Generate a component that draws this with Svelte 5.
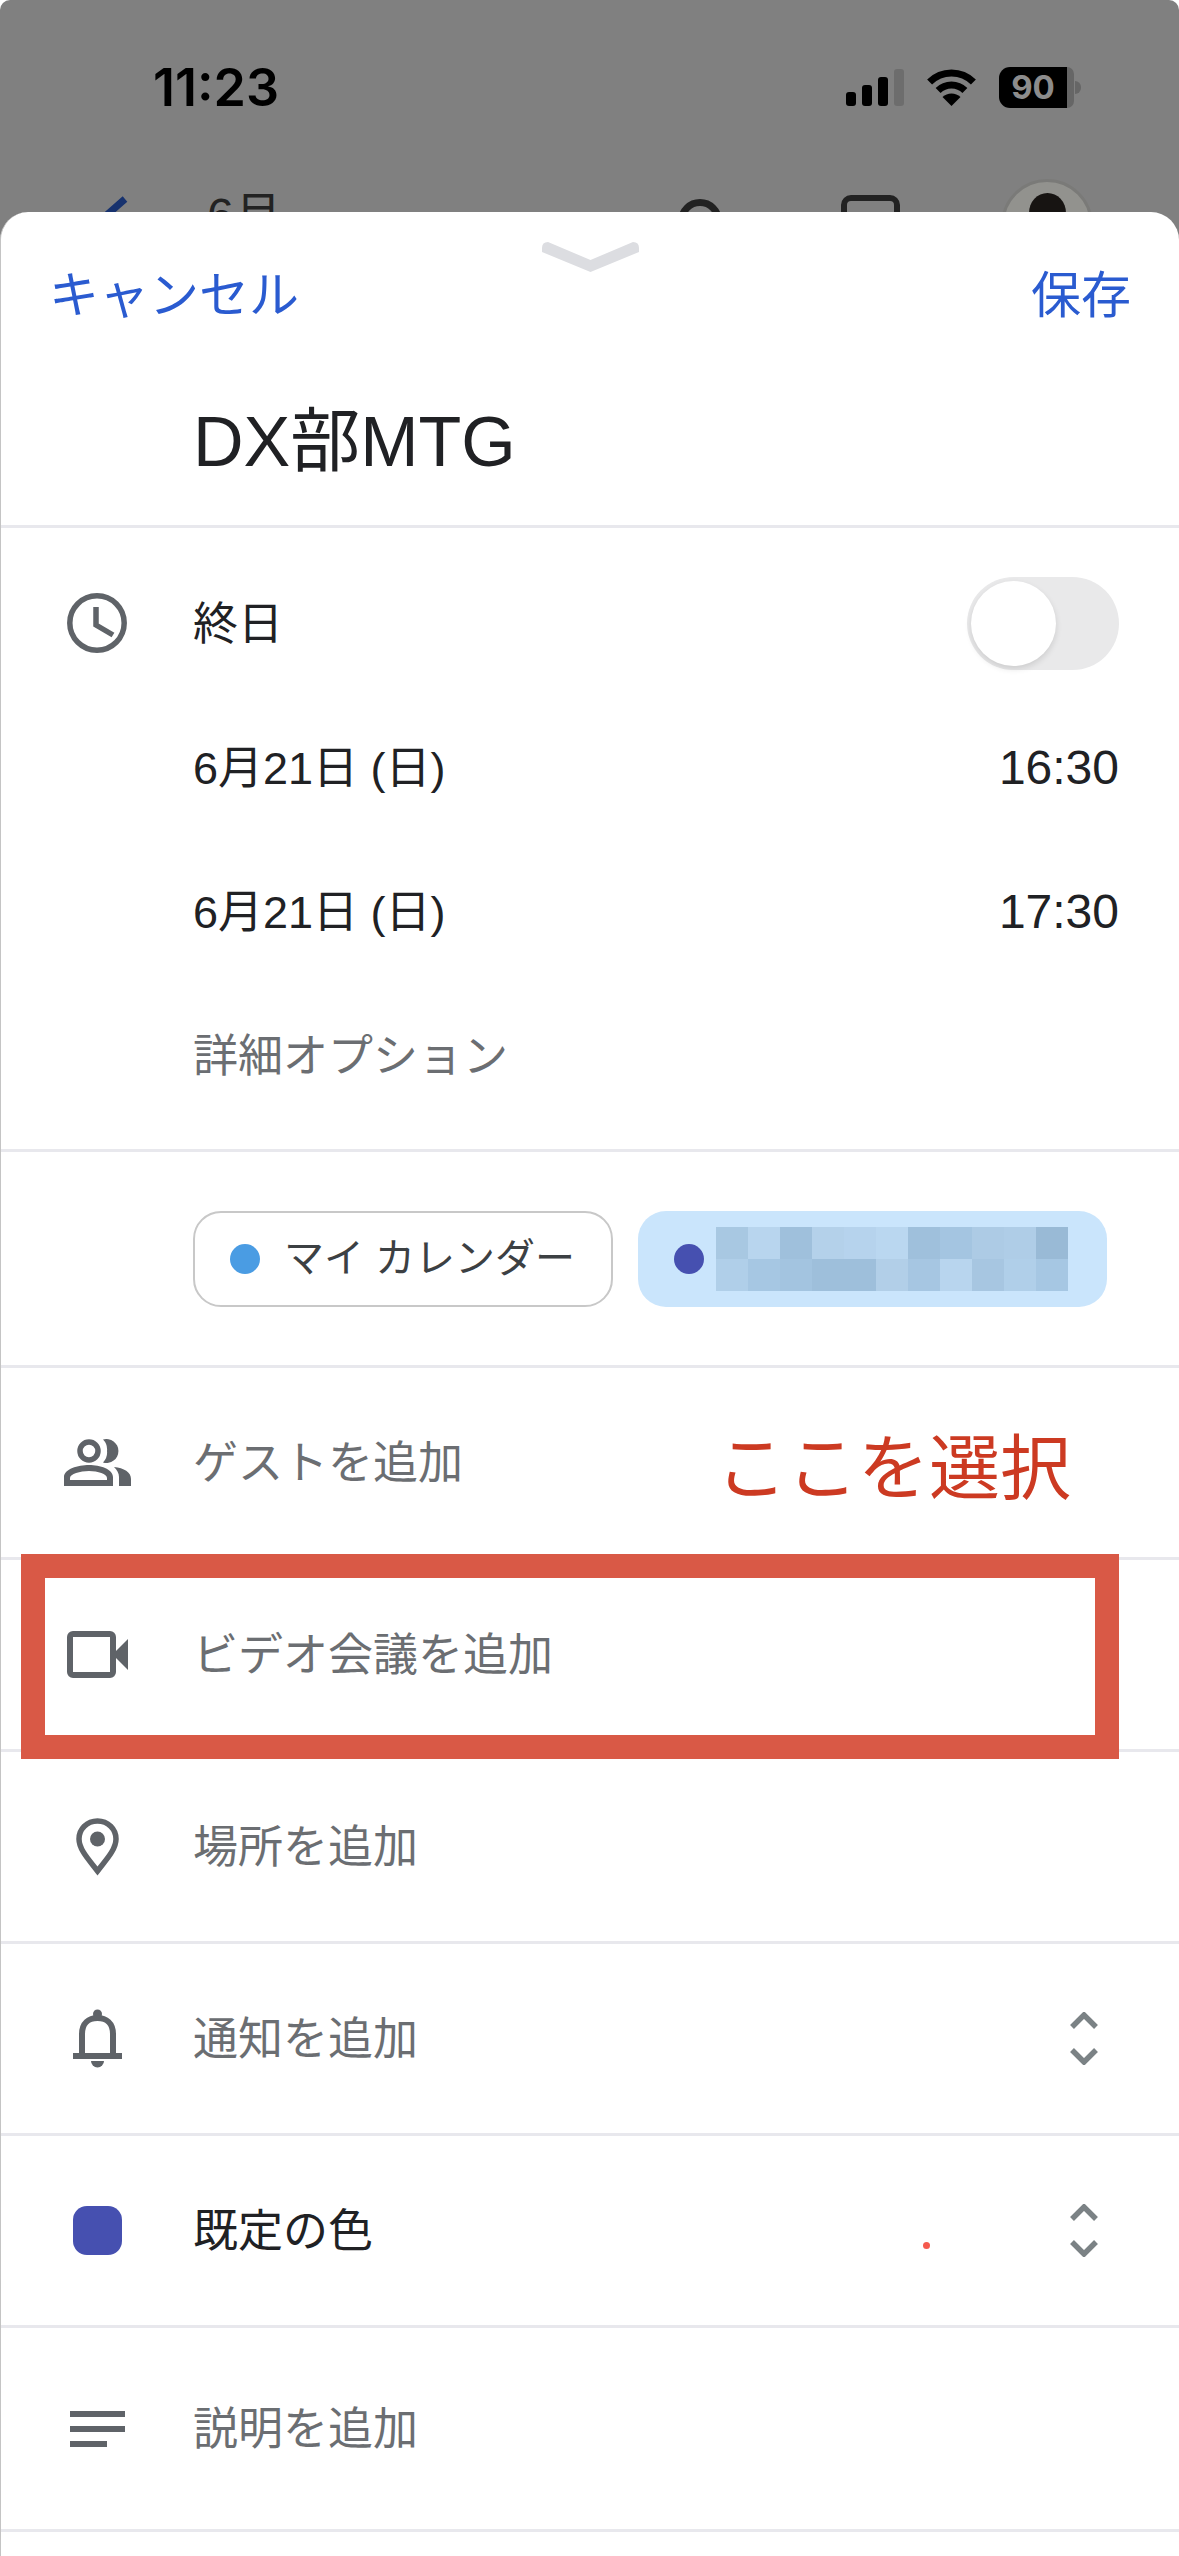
<script>
  const mosaicTop = ['#a8c8e2', '#b8d5ee', '#9fc0dc', '#b4d1ea', '#b6d3ed', '#bad7f0', '#9fc0dc', '#a4c5e1', '#adcbe5', '#afcde7', '#99bad6'];
  const mosaicBottom = ['#b0cfe9', '#a6c7e3', '#a3c4e0', '#9ebfdb', '#9ebfdb', '#b2cfe8', '#a6c6e2', '#b8d5ee', '#a7c6e1', '#b0cfe9', '#a6c7e3'];
  const mosaic = [...mosaicTop, ...mosaicBottom];
</script>

{#snippet updown()}
  <svg class="updown" width="28" height="53" viewBox="0 0 28 53" fill="none" stroke="#7b8285" stroke-width="5.5">
    <path d="M2 15 L14 3 L26 15" />
    <path d="M2 38 L14 50 L26 38" />
  </svg>
{/snippet}

<div class="page">
  <div class="backdrop">
    <div class="status">
      <span class="time">11:23</span>
      <div class="status-icons">
        <svg width="58" height="37" viewBox="0 0 58 37" fill="#000">
          <rect x="0" y="23" width="10" height="14" rx="3" />
          <rect x="16" y="16" width="10" height="21" rx="3" />
          <rect x="32" y="8" width="10" height="29" rx="3" />
          <rect x="48" y="0" width="10" height="37" rx="3" fill="#6d6d6d" />
        </svg>
        <svg class="wifi" width="51" height="37" viewBox="0 0 51 37" fill="none" stroke="#000" stroke-width="7">
          <path d="M3.6 13.1 A31 31 0 0 1 47.4 13.1" />
          <path d="M12.1 21.6 A19 19 0 0 1 38.9 21.6" />
          <path d="M25.5 37 L16.5 28 A13 13 0 0 1 34.5 28 Z" fill="#000" stroke="none" />
        </svg>
        <div class="battery">
          <div class="battery-body"><span>90</span></div>
          <div class="battery-rest"></div>
          <div class="battery-nub"></div>
        </div>
      </div>
    </div>
    <div class="appbar">
      <svg class="back" width="46" height="60" viewBox="0 0 46 60" fill="none" stroke="#17326e" stroke-width="7">
        <path d="M40 4 L8 32 L40 60" />
      </svg>
      <span class="month">6月</span>
      <div class="search"></div>
      <div class="cal"></div>
      <div class="avatar"><div class="hair"></div></div>
    </div>
  </div>

  <div class="sheet">
    <svg class="handle" width="97" height="30" viewBox="0 0 97 30" fill="#dcdde1">
      <path d="M6 0 L48.5 18 L91 0 Q97 0 97 6 V10 L48.5 30 L0 10 V6 Q0 0 6 0 Z" />
    </svg>

    <header class="head">
      <div class="actions">
        <span>キャンセル</span>
        <span>保存</span>
      </div>
      <div class="title">DX部MTG</div>
    </header>

    <section class="times">
      <div class="time-row">
        <div class="icon">
          <svg width="60" height="60" viewBox="0 0 60 60" fill="none" stroke="#5f6368" stroke-width="5.5">
            <circle cx="30" cy="30" r="27.2" />
            <path d="M29 14 V32 L46 42" />
          </svg>
        </div>
        <span class="label">終日</span>
        <div class="toggle"><div class="knob"></div></div>
      </div>
      <div class="time-row">
        <div class="icon"></div>
        <span class="label">6月21日 (日)</span>
        <span class="clock">16:30</span>
      </div>
      <div class="time-row">
        <div class="icon"></div>
        <span class="label">6月21日 (日)</span>
        <span class="clock">17:30</span>
      </div>
      <div class="time-row">
        <div class="icon"></div>
        <span class="label muted">詳細オプション</span>
      </div>
    </section>

    <section class="calendars">
      <div class="chip plain">
        <i class="dot light"></i>
        <span>マイ カレンダー</span>
      </div>
      <div class="chip picked">
        <i class="dot indigo"></i>
        <div class="mosaic">
          {#each mosaic as c}
            <b style="background:{c}"></b>
          {/each}
        </div>
      </div>
    </section>

    <div class="row">
      <div class="icon">
        <svg width="67" height="47" viewBox="0 0 67 47" fill="#5f6368">
          <circle cx="25" cy="12" r="9" fill="none" stroke="#5f6368" stroke-width="5.5" />
          <path d="M39 .5 A12 12 0 1 1 39 23.5 A14 14 0 0 0 43 12 A14 14 0 0 0 39 .5 Z" />
          <path fill-rule="evenodd" d="M0 47 V38 C0 30 14 26 25 26 C36 26 49 30 49 38 V47 Z M6 41 H43 V39 C43 35 34 32 25 32 C16 32 6 35 6 39 Z" />
          <path d="M50 28 C60 29 67 33 67 40 V47 H55 V38 C55 34 53 31 50 28 Z" />
        </svg>
      </div>
      <span class="label muted">ゲストを追加</span>
    </div>

    <div class="row">
      <div class="icon">
        <svg width="61" height="47" viewBox="0 0 61 47" fill="none" stroke="#5f6368" stroke-width="6">
          <rect x="3" y="3" width="43" height="41" rx="3" />
          <path d="M49 20 L61 8 V39 L49 27 Z" fill="#5f6368" stroke="none" />
        </svg>
      </div>
      <span class="label muted">ビデオ会議を追加</span>
    </div>

    <div class="row">
      <div class="icon">
        <svg width="43" height="58" viewBox="0 0 43 58" fill="none" stroke="#5f6368" stroke-width="5.5">
          <path d="M21.5 3 C32 3 40 11 40 21 C40 32 29 43 21.5 53 C14 43 3 32 3 21 C3 11 11 3 21.5 3 Z" />
          <circle cx="21.5" cy="21" r="7.5" fill="#5f6368" stroke="none" />
        </svg>
      </div>
      <span class="label muted">場所を追加</span>
    </div>

    <div class="row">
      <div class="icon">
        <svg width="49" height="59" viewBox="0 0 49 59" fill="#5f6368">
          <circle cx="24.5" cy="5" r="4.5" />
          <path d="M9 45 V25 C9 14 16 9 24.5 9 C33 9 40 14 40 25 V45" fill="none" stroke="#5f6368" stroke-width="6" />
          <rect x="0" y="44" width="49" height="6" />
          <path d="M18 52 H31 A6.5 6.5 0 0 1 18 52 Z" />
        </svg>
      </div>
      <span class="label muted">通知を追加</span>
      {@render updown()}
    </div>

    <div class="row">
      <div class="icon"><div class="swatch"></div></div>
      <span class="label">既定の色</span>
      {@render updown()}
    </div>

    <div class="row tall">
      <div class="icon">
        <div class="lines">
          <i></i>
          <i></i>
          <i class="short"></i>
        </div>
      </div>
      <span class="label muted">説明を追加</span>
    </div>

    <!-- annotations drawn on top of the screenshot -->
    <span class="note">ここを選択</span>
    <div class="highlight"></div>
    <i class="speck"></i>
  </div>
</div>

<style>
  :global(body) {
    margin: 0;
    background: #fff;
  }

  .page {
    width: 1179px;
    height: 2556px;
    overflow: hidden;
    font-family: "Liberation Sans", "Noto Sans CJK JP", sans-serif;
    color: #202124;
  }

  .backdrop {
    height: 240px;
    margin-bottom: -28px;
    background: #808080;
    border-radius: 10px 10px 0 0;
    overflow: hidden;
  }

  .status {
    height: 174px;
    display: flex;
    align-items: center;
    justify-content: space-between;
    padding: 0 98px 0 153px;
    box-sizing: border-box;
  }

  .time {
    font-family: Inter, "Liberation Sans", sans-serif;
    font-size: 52px;
    font-weight: 600;
    color: #000;
  }

  .status-icons {
    display: flex;
    align-items: center;
  }

  .wifi {
    margin-left: 22px;
  }

  .battery {
    margin-left: 22px;
    display: flex;
    align-items: center;
  }

  .battery-body {
    width: 68px;
    height: 41px;
    background: #000;
    border-radius: 11px 0 0 11px;
    display: flex;
    align-items: center;
    justify-content: center;
    font-family: Inter, "Liberation Sans", sans-serif;
    font-size: 33px;
    font-weight: 700;
    color: #8c8c8c;
  }

  .battery-rest {
    width: 7px;
    height: 41px;
    background: #666;
    border-radius: 0 11px 11px 0;
  }

  .battery-nub {
    width: 6px;
    height: 13px;
    margin-left: 1px;
    background: #666;
    border-radius: 0 6px 6px 0;
  }

  .appbar {
    display: flex;
    align-items: flex-start;
    height: 100px;
    margin-top: 5px;
    padding: 0 86px 0 85px;
  }

  .back {
    margin-top: 16px;
  }

  .month {
    margin: 7px 0 0 76px;
    font-size: 48px;
    line-height: 60px;
    color: #222;
  }

  .search {
    width: 44px;
    height: 44px;
    box-sizing: border-box;
    margin: 20px 0 0 auto;
    border: 7px solid #222;
    border-radius: 50%;
  }

  .cal {
    width: 59px;
    height: 60px;
    box-sizing: border-box;
    margin: 16px 0 0 119px;
    border: 6px solid #222;
    border-radius: 10px;
  }

  .avatar {
    width: 92px;
    height: 92px;
    margin-left: 101px;
    box-sizing: border-box;
    background: #92928e;
    border: 3px solid #7a7a78;
    border-radius: 50%;
    display: flex;
    justify-content: center;
  }

  .hair {
    width: 37px;
    height: 40px;
    margin-top: 11px;
    background: #171412;
    border-radius: 50%;
  }

  .sheet {
    position: relative;
    background: #fff;
    border-radius: 28px 28px 0 0;
    border-left: 1px solid #c4c4c4;
    box-sizing: border-box;
    height: 2344px;
  }

  .handle {
    position: absolute;
    top: 30px;
    left: 541px;
  }

  .head {
    height: 316px;
    padding-top: 54px;
    box-sizing: border-box;
    border-bottom: 3px solid #e8e8ed;
  }

  .actions {
    display: flex;
    justify-content: space-between;
    padding: 0 48px 0 48px;
    font-size: 50px;
    line-height: 60px;
    color: #2a5bd0;
  }

  .title {
    margin: 76px 0 0 192px;
    font-size: 70px;
    line-height: 80px;
  }

  .times {
    padding: 23px 0 22px;
    border-bottom: 3px solid #e8e8ed;
  }

  .time-row {
    height: 144px;
    display: flex;
    align-items: center;
  }

  .icon {
    width: 192px;
    flex: none;
    display: flex;
    justify-content: center;
    align-items: center;
  }

  .icon svg {
    display: block;
  }

  .label {
    font-size: 45px;
    padding-bottom: 6px;
  }

  .muted {
    color: #6b6e72;
  }

  .clock {
    margin-left: auto;
    margin-right: 60px;
    font-size: 48px;
  }

  .toggle {
    margin-left: auto;
    margin-right: 60px;
    width: 152px;
    height: 93px;
    padding: 4px;
    box-sizing: border-box;
    border-radius: 47px;
    background: #e9e9ea;
  }

  .knob {
    width: 85px;
    height: 85px;
    background: #fff;
    border-radius: 50%;
    box-shadow: 0 3px 6px rgba(0, 0, 0, 0.12);
  }

  .calendars {
    display: flex;
    align-items: flex-start;
    gap: 25px;
    height: 154px;
    padding: 59px 0 0 192px;
    border-bottom: 3px solid #e8e8ed;
  }

  .chip {
    height: 96px;
    box-sizing: border-box;
    display: flex;
    align-items: center;
    border-radius: 28px;
  }

  .plain {
    width: 420px;
    padding-left: 35px;
    border: 2px solid #c8c8c8;
    font-size: 40px;
    color: #3c4043;
  }

  .plain span {
    margin-left: 24px;
    padding-bottom: 8px;
  }

  .picked {
    width: 469px;
    padding-left: 36px;
    background: #cae5fc;
  }

  .dot {
    width: 30px;
    height: 30px;
    border-radius: 50%;
    flex: none;
  }

  .light {
    background: #4a9ce3;
  }

  .indigo {
    background: #4650b0;
  }

  .mosaic {
    margin-left: 12px;
    display: grid;
    grid-template-columns: repeat(11, 32px);
    grid-auto-rows: 32px;
  }

  .row {
    height: 189px;
    display: flex;
    align-items: center;
    border-bottom: 3px solid #e8e8ed;
  }

  .tall {
    height: 201px;
  }

  .updown {
    margin-left: auto;
    margin-right: 81px;
  }

  .swatch {
    width: 49px;
    height: 49px;
    background: #4650b0;
    border-radius: 14px;
  }

  .lines {
    width: 55px;
    display: flex;
    flex-direction: column;
    gap: 9px;
  }

  .lines i {
    height: 6px;
    background: #5f6368;
  }

  .lines .short {
    width: 37px;
  }

  .note {
    position: absolute;
    left: 715px;
    top: 1212px;
    font-size: 71px;
    line-height: 90px;
    color: #cc3a22;
  }

  .highlight {
    position: absolute;
    left: 20px;
    top: 1342px;
    width: 1098px;
    height: 205px;
    box-sizing: border-box;
    border: 24px solid #d95946;
  }

  .speck {
    position: absolute;
    left: 922px;
    top: 2030px;
    width: 7px;
    height: 7px;
    background: #f55a4e;
    border-radius: 50%;
  }
</style>
